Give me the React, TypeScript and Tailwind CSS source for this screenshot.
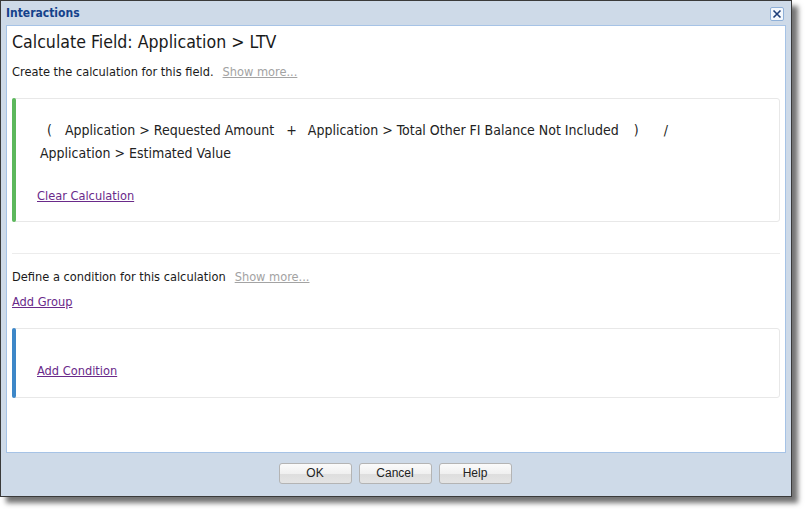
import React from "react";

const F = { fontFamily: '"DejaVu Sans Condensed", "DejaVu Sans", sans-serif' };

function Btn({ label }: { label: string }) {
  return (
    <button className="w-[73px] h-[21px] rounded-[3px] border border-[#b4b4b4] bg-[linear-gradient(#fbfbfb_0%,#f0f0f0_50%,#dedede_51%,#e4e4e4_100%)] text-[12px] text-[#222] font-['Liberation_Sans',sans-serif] leading-none">
      {label}
    </button>
  );
}

export default function App() {
  return (
    <div className="w-[807px] h-[509px] bg-white relative" style={F}>
      <div className="w-[792px] h-[497px] border border-[#3a3a3a] bg-[#cedae8] flex flex-col shadow-[6px_6px_5px_rgba(0,0,0,0.55)]">
        <div className="h-[24px] flex items-center justify-between pl-[5px] pr-[7px] shrink-0">
          <span className="text-[12px] font-bold text-[#15428b]">Interactions</span>
          <span className="w-[14px] h-[14px] mt-[2px] rounded-[2px] border border-[#8fb0d8] bg-[#f4f8fd] flex items-center justify-center">
            <svg width="10" height="10" viewBox="0 0 10 10">
              <path d="M1.5 1.5 L8.5 8.5 M8.5 1.5 L1.5 8.5" stroke="#1f3f7a" strokeWidth="1.6" />
            </svg>
          </span>
        </div>
        <div className="mx-[5px] h-[428px] bg-white border border-[#a6c3e6] px-[5px] pt-[4px] text-[#1a1a1a] shrink-0">
          <div className="text-[17.6px] leading-[24px]">Calculate Field: Application &gt; LTV</div>
          <div className="mt-[9px] text-[12.7px] leading-[17px] flex gap-[9px]">
            <span>Create the calculation for this field.</span>
            <span className="text-[#a3a3a3] underline">Show more...</span>
          </div>
          <div className="mt-[18px] h-[124px] border border-[#e8e8e8] rounded-[3px] flex">
            <div className="w-[4px] bg-[#5cb85c] rounded-[2px] -ml-px -my-px"></div>
            <div className="pl-[24px] pr-4 pt-[20px]">
              <div className="text-[14px] leading-[23px] text-[#222]">
                <span className="pl-[7px] pr-[13px]">(</span>
                <span>Application &gt; Requested Amount</span>
                <span className="pl-[12px] pr-[11px]">+</span>
                <span>Application &gt; Total Other FI Balance Not Included</span>
                <span className="pl-[15px] pr-[14px]">)</span>
                <span className="pl-[11px]">/</span>
                <br />
                <span>Application &gt; Estimated Value</span>
              </div>
              <div className="mt-[22px] text-[12.7px] leading-[17px] text-[#6a2a8a] underline ml-[-3px]">Clear Calculation</div>
            </div>
          </div>
          <div className="mt-[31px] border-t border-[#ececec]"></div>
          <div className="mt-[14px] text-[12.7px] leading-[17px] flex gap-[9px]">
            <span>Define a condition for this calculation</span>
            <span className="text-[#a3a3a3] underline">Show more...</span>
          </div>
          <div className="mt-[8px] text-[12.7px] leading-[17px] text-[#6a2a8a] underline">Add Group</div>
          <div className="mt-[18px] h-[70px] border border-[#e8e8e8] rounded-[3px] flex">
            <div className="w-[4px] bg-[#3d87c8] rounded-[2px] -ml-px -my-px"></div>
            <div className="pl-[21px] pt-[33px] text-[12.7px] leading-[17px] text-[#6a2a8a] underline">Add Condition</div>
          </div>
        </div>
        <div className="flex-1 flex items-center justify-center gap-[7px] pr-[2px] pb-[3px]">
          <Btn label="OK" />
          <Btn label="Cancel" />
          <Btn label="Help" />
        </div>
      </div>
    </div>
  );
}
